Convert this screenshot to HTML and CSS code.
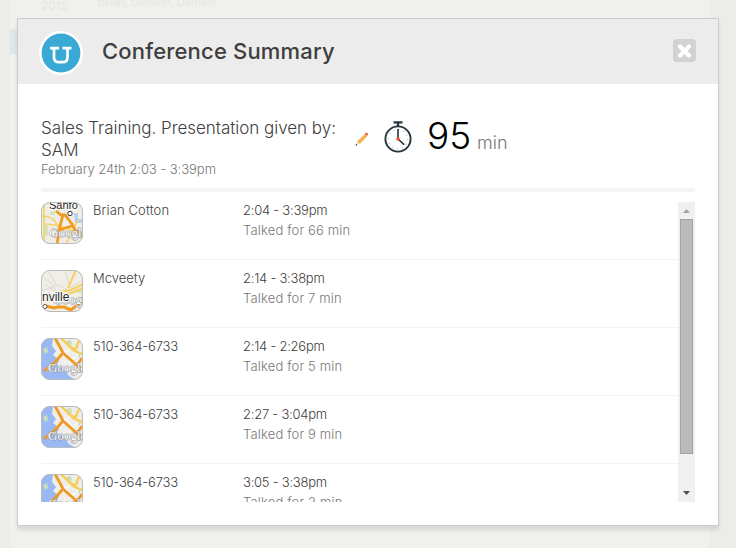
FILE: index.html
```
<!DOCTYPE html>
<html lang="en">
<head>
<meta charset="utf-8">
<title>Conference Summary</title>
<link rel="stylesheet" href="styles.css">
</head>
<body>
<svg class="defs" width="0" height="0" aria-hidden="true">
  <defs>
    <g id="bay">
      <path fill="#eeede8" d="M0 0h42v42H0z"/>
      <path fill="#99b8f4" d="M0 0h12l-1 8 4 5-3 4 6 5-2 5 6 3 6 8 7 4H0z"/>
      <path fill="#c9dfb4" d="M2 11l4-2 1 5-3 2zM25 3l5-1 1 5-4 1zM36 15l4 2-2 3zM11 24l4 1 1 4-5-1z"/>
      <path fill="none" stroke="#fff" d="M23 12l9 9M29 10l-8 9M28 25l12-11M23 23l12 13"/>
      <path fill="none" stroke="#f6cd52" stroke-width="2.2" d="M20 0l7 7 5 5 9 4M28 8q8 6 8-1l4-7"/>
      <path fill="none" stroke="#f09a25" stroke-width="2.8" d="M14 0l5 9 3 6-8 9-11 9M22 15l8 7 12 11M41 20l-4 6 3 6"/>
    </g>
  </defs>
</svg>
<div class="backdrop">
  <div class="backdrop-row"><span class="year">2015</span><span>Brian, Damien, Damien</span></div>
  <i class="selected"></i>
</div>
<main class="dialog">
  <header class="header">
    <svg class="logo" viewBox="0 0 44 44">
      <circle cx="22" cy="22" r="22" fill="#fff"/><circle cx="22" cy="22" r="19.4" fill="#3aa9d6"/>
      <path d="M11 17.2h9M23.500 17.200h9M15 17.5v8.700q0 5 5 5h3.500q5 0 5-5v-8.700" fill="none" stroke="#fff" stroke-width="2.7"/>
    </svg>
    <h1>Conference Summary</h1>
    <button class="close" aria-label="Close"><svg viewBox="0 0 23 23"><path d="M7 7.5l9 9M16 7.5l-9 9" stroke="#fff" stroke-width="4.4" stroke-linecap="round"/></svg></button>
  </header>
  <div class="content">
    <section class="summary">
      <div class="topic"><h2>Sales Training. Presentation given by:<br>SAM</h2><p>February 24th 2:03 - 3:39pm</p></div>
      <svg class="pencil" viewBox="0 0 14 14">
        <path d="M2.2 9.3L9.5 2l2.6 2.6-7.3 7.3z" fill="#f5bd58"/><path d="M3.7 10.8L11 3.5" stroke="#e5a13e"/>
        <path d="M9.5 2l1-1.1q1-.8 2 .2t.3 2l-.8.9z" fill="#ea6650"/><path d="M2.2 9.3L1 13l3.8-1.1z" fill="#f4d8b0"/><path d="M.7 12.200h1.300v1.200h-1.300z" fill="#333"/>
      </svg>
      <svg class="watch" viewBox="0 0 28 32">
        <path d="M9.500 1.3h9M14 1v4" stroke="#26363d" stroke-width="2.3"/>
        <circle cx="14" cy="18" r="12.6" fill="#fff" stroke="#26363d" stroke-width="1.9"/>
        <circle cx="14" cy="18" r="9.6" fill="none" stroke="#c8cccd" stroke-width="1.8" stroke-dasharray="1 4.03"/>
        <path d="M14 18V8M14 18l6.2 5.7" stroke="#1d2529" stroke-width="1.5"/><circle cx="14" cy="18" r="1.800" fill="#f4512c"/>
      </svg>
      <div class="duration"><span class="num">95</span><span class="unit">min</span></div>
    </section>
    <div class="panel">
      <div class="list">
        <article class="row">
          <svg class="map" viewBox="0 0 42 42"><path fill="#eeede6" d="M0 0h42v42H0z"/><path fill="#b9cfef" d="M33 11h4v6h5v4h-8zM34 29h8v7h-5z"/><path fill="#d2e3bc" d="M3 23l4 1v9l-4 2zM9 10l5-1v4H9z"/>
            <path d="M0 14q13 0 16 9t10 3l16 9M3 0v42M4 22l18 2M37 18L25 42" fill="none" stroke="#f3d464" stroke-width="1.6"/><path d="M15 9l5 4h4l7 9 3 6 6 3M22 13l-3 11-3 18M17 28l14-4" fill="none" stroke="#f29a20" stroke-width="2.8"/>
            <text x="8" y="7" class="place">Sanfo</text><circle cx="29" cy="11.5" r="2.2" fill="#fff" stroke="#333"/><text x="8" y="35" class="google">Google</text></svg>
          <div class="name">Brian Cotton</div><div class="times"><b>2:04 - 3:39pm</b><span>Talked for 66 min</span></div>
        </article>
        <article class="row">
          <svg class="map" viewBox="0 0 42 42"><path fill="#f1eee8" d="M0 0h42v42H0z"/><path fill="#d4e4bd" d="M35 19h7v4h-7z"/><path d="M2 7l9 7 5 10M0 21l17-6 12 6M8 2l7 12M24 0l5 18 13-8M4 14l13 10" fill="none" stroke="#ddd8d1"/>
            <path d="M42 14L30 20l-13 2-8 8-9 1M35 0l-8 18M18 28l24-10" fill="none" stroke="#f7d163" stroke-width="2.2"/><path d="M5 36l8 2 4-1h6l7 3 6-5 7-2" fill="none" stroke="#f29a20" stroke-width="3"/>
            <text x="12" y="34" class="google">Google</text><text x="1" y="31" class="place wide">nville</text><circle cx="4" cy="36.5" r="2" fill="#fff" stroke="#555"/></svg>
          <div class="name wide-name">Mcveety</div><div class="times"><b>2:14 - 3:38pm</b><span>Talked for 7 min</span></div>
        </article>
        <article class="row">
          <svg class="map" viewBox="0 0 42 42"><use href="#bay"/><text x="7" y="34" class="google">Google</text></svg>
          <div class="name phone">510-364-6733</div><div class="times"><b>2:14 - 2:26pm</b><span>Talked for 5 min</span></div>
        </article>
        <article class="row">
          <svg class="map" viewBox="0 0 42 42"><use href="#bay"/><text x="7" y="34" class="google">Google</text></svg>
          <div class="name phone">510-364-6733</div><div class="times"><b>2:27 - 3:04pm</b><span>Talked for 9 min</span></div>
        </article>
        <article class="row">
          <svg class="map" viewBox="0 0 42 42"><use href="#bay"/><text x="7" y="34" class="google">Google</text></svg>
          <div class="name phone">510-364-6733</div><div class="times"><b>3:05 - 3:38pm</b><span>Talked for 2 min</span></div>
        </article>
      </div>
      <div class="scrollbar">
        <svg class="arrow" viewBox="0 0 17 17"><path d="M5 11h7L8.500 7z" fill="#a3a3a3"/></svg>
        <div class="thumb"></div>
        <svg class="arrow down" viewBox="0 0 17 17"><path d="M5 6h7L8.500 10z" fill="#505050"/></svg>
      </div>
    </div>
  </div>
</main>
</body>
</html>
```
FILE: styles.css
```
* { box-sizing: border-box; }
body { margin: 0; height: 548px; overflow: hidden; background: #ecede8; font-family: Inter, "Open Sans", sans-serif; color: #484848; }
h1, h2, p { margin: 0; }
svg { display: block; flex: none; }
.defs { position: absolute; }
.backdrop { position: absolute; top: 0; left: 10px; width: 699px; height: 548px; background: #f0f1ec; overflow: hidden; }
.backdrop-row { display: flex; margin-top: -5px; padding-left: 31px; font-size: 12px; line-height: 15px; color: #e5e6e1; white-space: nowrap; }
.backdrop-row span:last-child { font-size: 11px; }
.year { width: 57px; padding-top: 3px; }
.selected { display: block; width: 8px; height: 25px; margin-top: 16px; background: #dde8e9; }
.dialog { position: relative; width: 702px; height: 508px; margin: 18px 0 0 17px; background: #fff; border: 1px solid #cbccce; box-shadow: 0 4px 4px rgba(0,0,0,.1); }
.header { display: flex; align-items: center; height: 65px; padding: 0 22px 0 21px; background: #ececec; }
.logo { width: 44px; height: 44px; margin-top: 3px; }
h1 { flex: 1; margin: -2px 0 0 19px; font-size: 22px; font-weight: 500; line-height: 30px; letter-spacing: .18px; color: #3e3e3e; white-space: nowrap; }
.close { width: 23px; height: 23px; margin-bottom: 3px; padding: 0; border: 0; border-radius: 4px; background: #d1d2d4; }
.content { padding: 0 23px; }
.summary { display: flex; height: 108px; padding-top: 33px; border-bottom: 4px solid #f5f5f5; }
.topic { width: 314px; white-space: nowrap; }
h2 { font-size: 17px; line-height: 22px; font-weight: 300; letter-spacing: -.03px; color: #404040; }
.topic p { font-size: 13px; line-height: 17px; font-weight: 300; letter-spacing: -.04px; color: #777; }
.pencil { width: 14px; height: 14px; margin-top: 15px; }
.watch { width: 28px; height: 32px; margin: 4px 0 0 15px; }
.duration { display: flex; align-items: baseline; margin-left: 15px; white-space: nowrap; }
.num { width: 50px; font-size: 37px; line-height: 38px; font-weight: 300; color: #000; }
.unit { font-size: 18px; font-weight: 300; letter-spacing: .1px; color: #777; }
.panel { display: flex; height: 300px; margin-top: 10px; }
.list { flex: 1; overflow: hidden; }
.row { display: flex; height: 58px; margin-bottom: 10px; border-bottom: 1px solid #f3f3f3; font-size: 13px; line-height: 20px; font-weight: 300; color: #404040; white-space: nowrap; }
.map { width: 42px; height: 42px; border-radius: 9px; overflow: hidden; outline: 1px solid #bbb; outline-offset: -1px; }
.name { width: 150px; margin: -2px 0 0 10px; letter-spacing: .13px; }
.wide-name { letter-spacing: 0; }
.phone { letter-spacing: -.17px; }
.times { margin-top: -2px; }
.times b, .times span { display: block; font-weight: 300; }
.times b { letter-spacing: -.24px; }
.times span { letter-spacing: .16px; color: #777; }
.place { font: 11px "Liberation Sans", sans-serif; fill: #222; stroke: #fff; stroke-width: 2px; paint-order: stroke; }
.wide { font-size: 12px; }
.google { font: 13px "Liberation Serif", serif; fill: #fff; stroke: #8b8e92; stroke-width: 1px; paint-order: stroke; }
.scrollbar { display: flex; flex-direction: column; width: 17px; background: #f0f0f0; }
.arrow { width: 17px; height: 17px; }
.thumb { width: 13px; height: 235px; margin-left: 2px; background: #bbb; border: 1px solid #a3a3a3; }
.down { margin-top: auto; }
```
